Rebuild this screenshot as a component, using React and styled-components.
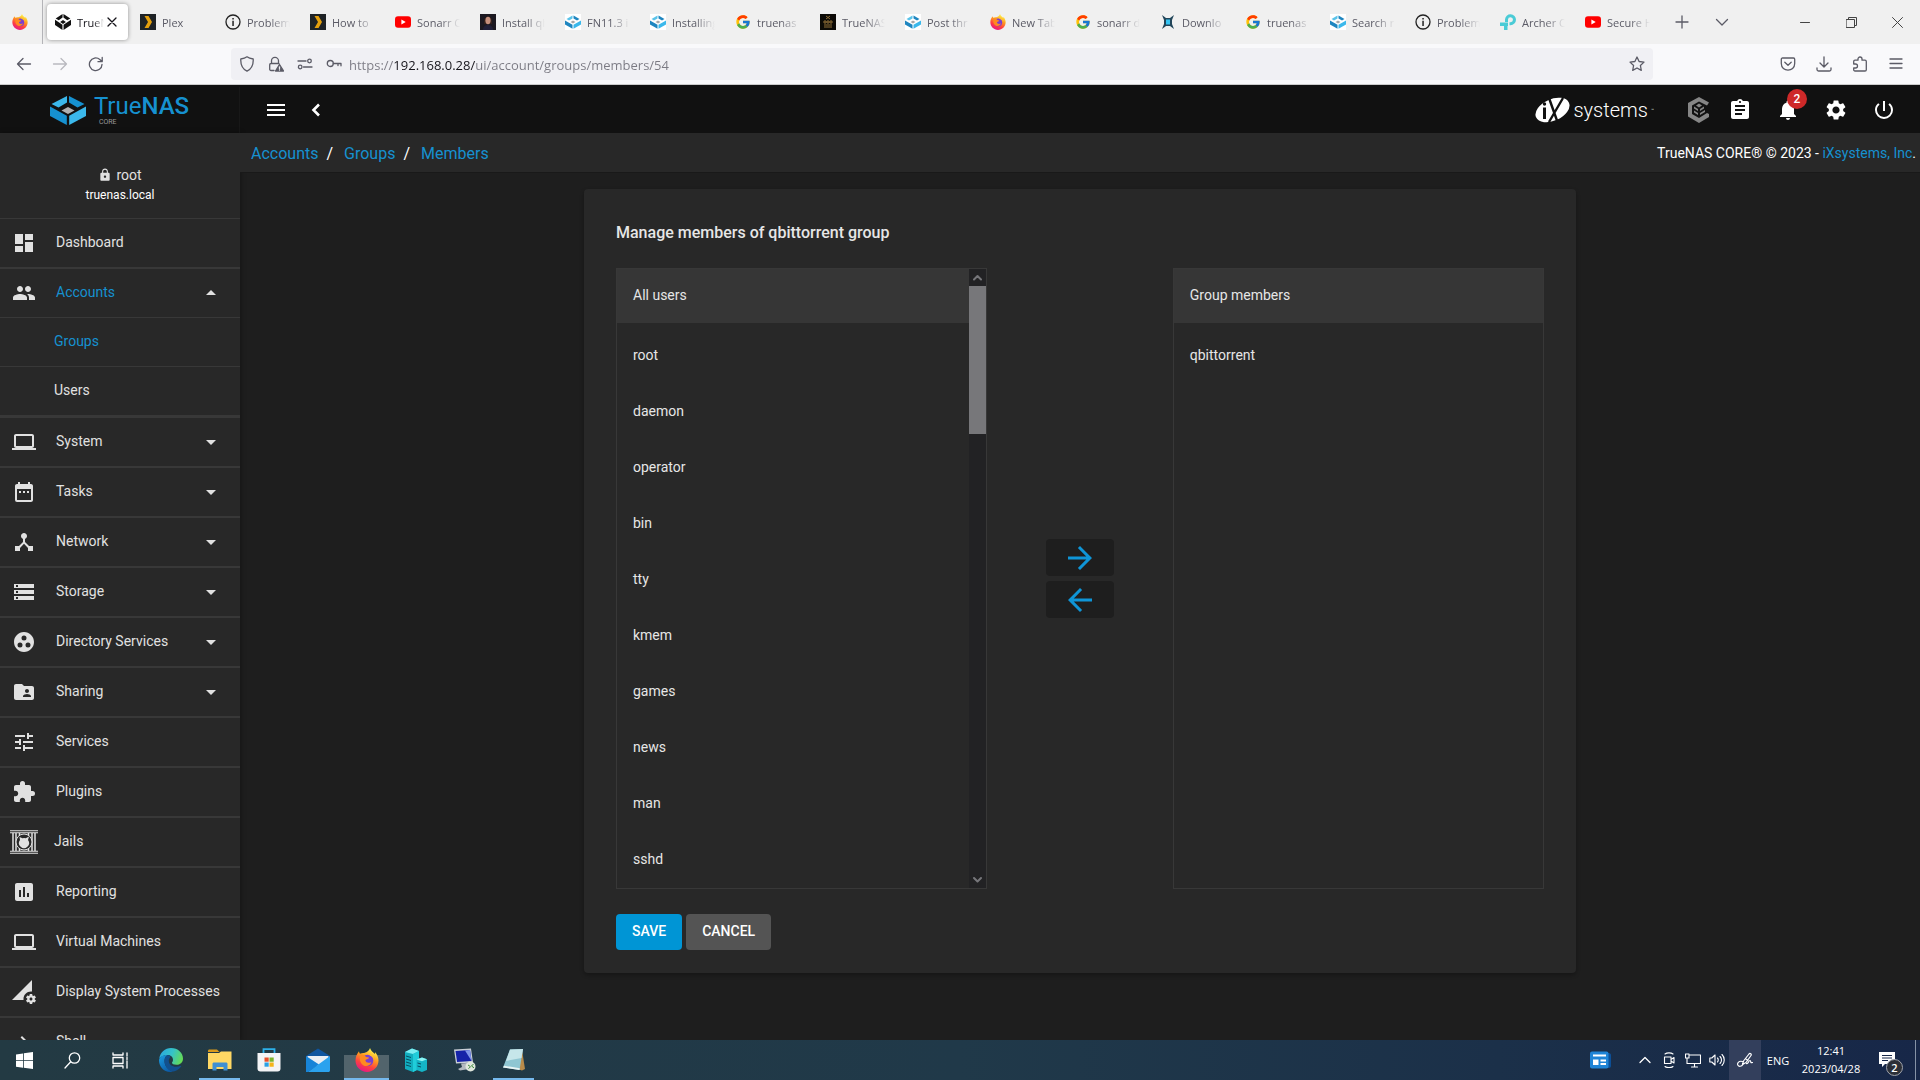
import React, { useState } from "react";
import styled, { createGlobalStyle, css } from "styled-components";
import {
  MdArrowBack,
  MdArrowDropDown,
  MdArrowDropUp,
  MdArrowForward,
  MdAssessment,
  MdAssignment,
  MdChevronRight,
  MdDashboard,
  MdDateRange,
  MdDeviceHub,
  MdExtension,
  MdFolderShared,
  MdGroup,
  MdGroupWork,
  MdLaptop,
  MdLock,
  MdMenu,
  MdNotifications,
  MdPermDataSetting,
  MdPowerSettingsNew,
  MdSettings,
  MdStorage,
  MdTune,
} from "react-icons/md";
import { FcGoogle } from "react-icons/fc";

const uiFont = `"Open Sans", "Noto Sans", sans-serif`;
const appFont = `Roboto, "Liberation Sans", sans-serif`;

const GlobalStyle = createGlobalStyle`
  * {
    box-sizing: border-box;
  }
  body {
    margin: 0;
    background: #1e1e1e;
    font-family: ${appFont};
    overflow: hidden;
  }
  button {
    border: 0;
    padding: 0;
    margin: 0;
    background: none;
    color: inherit;
    font: inherit;
    cursor: pointer;
  }
  a {
    color: inherit;
    text-decoration: none;
  }
  ul, ol {
    list-style: none;
    margin: 0;
    padding: 0;
  }
  svg {
    display: block;
    flex-shrink: 0;
  }
`;

const Screen = styled.div`
  display: flex;
  flex-direction: column;
  height: 100vh;
`;

// browser
const TabStrip = styled.div`
  display: flex;
  align-items: stretch;
  height: 44px;
  background: #f0f0f0;
  color: #5b5b66;
  font-family: ${uiFont};
  font-size: 11px;
`;
const PinnedTab = styled.button`
  display: flex;
  align-items: center;
  justify-content: center;
  width: 43px;
  padding-right: 3px;
  margin-right: 4px;
  border-right: 1px solid #b4b4b8;
`;
const TabItem = styled.div`
  display: flex;
  align-items: center;
  width: 81px;
  height: 36px;
  margin: 4px 4px 4px 0;
  padding-left: 8px;
  border-radius: 4px;
  ${(props) =>
    props.$active &&
    css`
      background: #fff;
      color: #15141a;
      box-shadow: 0 0 4px rgba(0, 0, 0, 0.4);
    `}
`;
const TabButton = styled.button`
  display: flex;
  align-items: center;
  gap: 6px;
  min-width: 0;
`;
const TabTitle = styled.span`
  width: ${(props) => (props.$active ? "27px" : "43px")};
  overflow: hidden;
  white-space: nowrap;
  text-align: left;
  line-height: 16px;
  padding-top: 1px;
  mask-image: linear-gradient(
    to left,
    transparent,
    #000 ${(props) => (props.$active ? "10px" : "20px")}
  );
`;
const StripButton = styled.button`
  display: flex;
  align-items: center;
  justify-content: center;
  width: 40px;
`;
const WindowButtons = styled.div`
  display: flex;
  margin-left: auto;
  color: #444;
`;
const WindowButton = styled.button`
  display: flex;
  align-items: center;
  justify-content: center;
  width: 46px;
`;
const Toolbar = styled.div`
  display: flex;
  align-items: center;
  height: 41px;
  padding: 0 6px;
  background: #f9f9fb;
  border-bottom: 1px solid #ccc;
  color: #5b5b66;
`;
const ToolButton = styled.button`
  display: flex;
  align-items: center;
  justify-content: center;
  width: 36px;
  height: 32px;
  opacity: ${(props) => (props.disabled ? 0.4 : 1)};
`;
const AddressBar = styled.label`
  display: flex;
  align-items: center;
  gap: 13px;
  flex: 1;
  height: 32px;
  margin-left: 117px;
  padding: 0 8px;
  border-radius: 4px;
  background: #f0f0f4;
`;
const AddressInput = styled.input`
  flex: 1;
  min-width: 0;
  border: 0;
  padding: 2px 0 0;
  margin-left: -6px;
  outline: none;
  font-family: ${uiFont};
  font-size: 13px;
  color: #7b7a83;
  -webkit-text-fill-color: transparent;
  background: linear-gradient(
    90deg,
    #7b7a83 45px,
    #15141a 45px,
    #15141a 127px,
    #7b7a83 127px
  );
  background-clip: text;
  -webkit-background-clip: text;
`;
const ToolGroup = styled.div`
  display: flex;
  margin-left: 117px;
`;

// header
const Header = styled.header`
  display: flex;
  align-items: center;
  height: 48px;
  padding-top: 2px;
  background: #111;
  color: #fff;
`;
const Brand = styled.a`
  display: flex;
  align-items: center;
  justify-content: center;
  gap: 8px;
  width: 240px;
  height: 46px;
  border-right: 1px solid #181818;
`;
const BrandWords = styled.span`
  display: flex;
  flex-direction: column;
  color: #1691d0;
  font-size: 24px;
  line-height: 23px;
  b {
    font-weight: 500;
  }
  small {
    padding-left: 5px;
    color: #999;
    font-size: 7px;
    line-height: 8px;
  }
`;
const HeaderNav = styled.div`
  display: flex;
  padding-left: 16px;
`;
const HeaderButton = styled.button`
  position: relative;
  display: flex;
  align-items: center;
  justify-content: center;
  width: ${(props) => props.$width || 48}px;
  height: 46px;
`;
const HeaderTools = styled.div`
  display: flex;
  align-items: center;
  margin-left: auto;
  padding-right: 12px;
`;
const IxLogo = styled.a`
  display: flex;
  align-items: center;
  gap: 3px;
  margin-right: 28px;
  font-size: 20px;
  font-weight: 300;
  line-height: 26px;
  sup {
    font-size: 5px;
    line-height: 8px;
    align-self: center;
  }
`;
const Badge = styled.span`
  position: absolute;
  top: 2px;
  right: 5px;
  width: 20px;
  height: 20px;
  border-radius: 50%;
  background: #ce2929;
  font-size: 12px;
  font-weight: 500;
  line-height: 20px;
  text-align: center;
`;

// sidebar
const Body = styled.div`
  display: flex;
  flex: 1;
  min-height: 0;
`;
const Sidebar = styled.nav`
  flex: 0 0 240px;
  overflow: hidden;
  background: #282828;
  color: #e1e1e1;
  box-shadow: 1px 0 5px rgba(0, 0, 0, 0.35);
`;
const UserInfo = styled.div`
  display: flex;
  flex-direction: column;
  align-items: center;
  height: 86px;
  padding-top: 32px;
  border-bottom: 1px solid #383838;
  font-size: 12px;
  line-height: 20px;
  color: #fff;
`;
const UserName = styled.span`
  display: flex;
  align-items: center;
  gap: 4px;
  color: #e1e1e1;
  font-size: 14px;
`;
const NavItem = styled.li`
  border-bottom: 2px solid #383838;
`;
const NavLink = styled.a`
  display: flex;
  align-items: center;
  height: 48px;
  padding: 0 17px 2px ${(props) => (props.$wide ? 10 : 12)}px;
  color: ${(props) => (props.$active ? "#1691d0" : "inherit")};
  font-size: 14px;
  svg {
    color: #e1e1e1;
    margin-top: 2px;
  }
`;
const NavLabel = styled.span`
  flex: 1;
  white-space: nowrap;
  margin-left: ${(props) => (props.$wide ? 16 : 20)}px;
`;
const SubItem = styled.li`
  border-top: 1px solid #383838;
  &:last-child {
    border-bottom: 1px solid #383838;
  }
`;
const SubLink = styled(NavLink)`
  padding-left: 54px;
`;

// page
const Main = styled.main`
  display: flex;
  flex-direction: column;
  flex: 1;
  min-width: 0;
`;
const BreadcrumbBar = styled.div`
  display: flex;
  align-items: center;
  justify-content: space-between;
  height: 40px;
  padding: 0 4px 0 11px;
  background: #282828;
  border-bottom: 1px solid #191919;
  color: #fff;
  font-size: 14px;
  a {
    color: #1691d0;
  }
`;
const Crumbs = styled.ol`
  display: flex;
  padding-top: 2px;
  font-size: 16px;
  li + li::before {
    content: "/";
    margin: 0 11px 0 8px;
  }
`;
const Card = styled.form`
  width: calc(60% - 16px);
  margin: 16px auto 0;
  padding: 32px 32px 23px;
  border-radius: 4px;
  background: #282828;
  color: #e6e6e6;
  box-shadow: 0 2px 4px rgba(0, 0, 0, 0.3);
  font-size: 14px;
`;
const CardTitle = styled.h1`
  margin: 0 0 23px;
  font-size: 16px;
  font-weight: 500;
  line-height: 24px;
`;
const Picker = styled.div`
  display: grid;
  grid-template-columns: 2fr 1fr 2fr;
  height: calc(100vh - 459px);
`;
const ListBox = styled.div`
  display: flex;
  min-width: 0;
  border: 1px solid #383838;
`;
const ListContent = styled.div`
  flex: 1;
  overflow: hidden;
`;
const ListHeading = styled.h2`
  margin: 0 0 4px;
  padding: 0 16px 2px;
  background: #363636;
  font-size: 14px;
  font-weight: 400;
  line-height: 52px;
`;
const ListOption = styled.button`
  display: block;
  width: 100%;
  padding: 0 16px;
  line-height: 56px;
  text-align: left;
`;
const ScrollTrack = styled.div`
  display: flex;
  flex-direction: column;
  width: 17px;
  background: #222224;
  color: #76767a;
`;
const ScrollArrow = styled.button`
  display: flex;
  align-items: center;
  justify-content: center;
  height: 17px;
`;
const ScrollThumb = styled.div`
  height: 148px;
  margin-bottom: auto;
  background: #77777a;
`;
const MoveButtons = styled.div`
  display: flex;
  flex-direction: column;
  align-items: center;
  justify-content: center;
  gap: 5px;
`;
const MoveButton = styled.button`
  display: flex;
  align-items: center;
  justify-content: center;
  width: 68px;
  height: 37px;
  border-radius: 4px;
  background: #1e1e1e;
  color: #0f95d7;
`;
const FormActions = styled.div`
  display: flex;
  gap: 4px;
  margin-top: 25px;
`;
const ActionButton = styled.button`
  height: 36px;
  padding: 0 16px 2px;
  border-radius: 4px;
  background: ${(props) => (props.$primary ? "#0095d5" : "#545454")};
  color: #fff;
  font-weight: 500;
  text-transform: uppercase;
`;

// taskbar
const Taskbar = styled.footer`
  display: flex;
  justify-content: space-between;
  height: 40px;
  background: linear-gradient(90deg, #233a43 0%, #203949 50%, #1b3049 78%, #172748 100%);
  color: #fff;
  font-family: ${uiFont};
  font-size: 11px;
`;
const TaskGroup = styled.div`
  display: flex;
  align-items: stretch;
`;
const PinnedApps = styled(TaskGroup)`
  margin-left: 2px;
`;
const TaskButton = styled.button`
  display: flex;
  align-items: center;
  justify-content: center;
  width: 48px;
`;
const AppButton = styled(TaskButton)`
  width: 41px;
  margin: 0 4px;
  border-bottom: 2px solid ${(props) => (props.$open ? "#76b9ed" : "transparent")};
  border-top: 2px solid transparent;
  ${(props) =>
    props.$focused &&
    css`
      width: 45px;
      margin: 0 2px;
      background: linear-gradient(transparent 13px, #52646c 13px) no-repeat;
    `}
`;
const TrayButton = styled.button`
  display: flex;
  align-items: center;
  justify-content: center;
  width: ${(props) => props.$width || 24}px;
  background: ${(props) => (props.$lit ? "#333f5c" : "none")};
`;
const Clock = styled.time`
  display: flex;
  flex-direction: column;
  align-items: center;
  justify-content: center;
  width: 72px;
  line-height: 18px;
`;
const Notice = styled.button`
  position: relative;
  width: 48px;
  padding-left: 12px;
`;
const NoticeCount = styled.span`
  position: absolute;
  left: 19px;
  top: 19px;
  width: 17px;
  height: 17px;
  border: 1px solid #a0a4ac;
  border-radius: 50%;
  background: #2c3038;
  font-weight: 600;
  line-height: 15px;
  text-align: center;
`;
const ShowDesktop = styled.button`
  width: 5px;
  border-left: 1px solid #8592a6;
`;

// drawings
const FirefoxIcon = ({ size = 16 }) => (
  <svg width={size} height={size} viewBox="0 0 24 24">
    <defs>
      <linearGradient id="ff-body" x1="0.75" y1="0" x2="0.3" y2="1">
        <stop offset="0.08" stopColor="#fff04a" />
        <stop offset="0.4" stopColor="#ff9a1f" />
        <stop offset="0.7" stopColor="#ff4040" />
        <stop offset="1" stopColor="#e3158a" />
      </linearGradient>
    </defs>
    <path
      d="M15 0c1 3 3 4 5 6 .2-.7 0-1.400-.1-2C22 6 23.500 9 23.500 12.500 23.500 18.800 18.300 24 12 24S.5 18.800.5 12.500C.5 8.600 2 5.500 4 3.200c.1 1.200.5 2 1 2.600C6.300 5 8 4.800 9.200 5c1.200-.4 4.800-1.500 5.800-5z"
      fill="url(#ff-body)"
    />
    <circle cx="12.500" cy="12.500" r="5.800" fill="#7b3fd0" />
    <path
      d="M5.500 7c2.500-.5 4.500.5 5.500 2l3 .6c0 1.600-2.600 1.500-3.600 2.700.3 2.600 3.600 3.300 6 1.600-1 3.800-5 5.200-8.200 3.300C5 15 4 10.500 5.500 7z"
      fill="#ff8a20"
    />
    <path d="M12 5c4 .5 7.500 3 7.500 8 0-3-2-4.500-4-5.200z" fill="#ffc22e" />
  </svg>
);

const TrueNasMark = ({ width = 36, height = 29, mono }) => {
  const c = mono
    ? ["#111", "#111", "#111", "#111", "#111"]
    : ["#3bb8eb", "#1691d0", "#1691d0", "#3bb8eb", "#b0b0b0"];
  return (
    <svg width={width} height={height} viewBox="0 0 36 29" preserveAspectRatio="none">
      <path d="M17 0v6.500L8.500 11.500 1.500 8z" fill={c[0]} />
      <path d="M19 0v6.500l8.500 5L34.500 8z" fill={c[1]} />
      <path d="M0 10.500l16.800 9.200V29L0 20z" fill={c[2]} />
      <path d="M36 10.500l-16.800 9.200V29L36 20z" fill={c[3]} />
      <path d="M11.500 14.500L18 11l6.500 3.500L18 18z" fill={c[4]} />
    </svg>
  );
};

const NasTabIcon = () => (
  <svg width="16" height="16" viewBox="0 0 16 16">
    <path d="M0 0h16v16H0z" fill="#fff" />
    <path d="M7.500 1.500v3L4 6.500 1.500 5z" fill="#5bc4ea" />
    <path d="M8.500 1.500v3L12 6.500 14.500 5z" fill="#1f86c0" />
    <path d="M0 6.500l7.500 4.200v4L0 10.500z" fill="#1f86c0" />
    <path d="M16 6.500l-7.500 4.200v4l7.500-4.200z" fill="#3bb8eb" />
    <path d="M5.500 8L8 6.600 10.500 8 8 9.400z" fill="#aaa" />
  </svg>
);

const PlexIcon = () => (
  <svg width="16" height="16" viewBox="0 0 16 16">
    <path d="M0 0h16v16H0z" fill="#1f2326" />
    <path d="M4.500 2h4l3.500 6-3.500 6h-4L8 8z" fill="#e5a00d" />
  </svg>
);

const InfoIcon = () => (
  <svg width="16" height="16" viewBox="0 0 16 16">
    <circle cx="8" cy="8" r="7" fill="none" stroke="#222" strokeWidth="1.300" />
    <path d="M7.300 6.800h1.500V12H7.300zM7.300 4h1.500v1.600H7.300z" fill="#222" />
  </svg>
);

const YoutubeIcon = () => (
  <svg width="16" height="16" viewBox="0 0 16 16">
    <rect y="2.300" width="16" height="11.400" rx="3" fill="#f00" />
    <path d="M6.400 5.400v5.200L10.700 8z" fill="#fff" />
  </svg>
);

const PortraitIcon = () => (
  <svg width="16" height="16" viewBox="0 0 16 16">
    <path d="M0 0h16v16H0z" fill="#1b1820" />
    <path d="M4 7c0-6 8-6 8 0v3H4z" fill="#33201c" />
    <ellipse cx="8" cy="6.500" rx="2.600" ry="3.700" fill="#c58f7c" />
    <path d="M3 16c0-4 3-5 5-5s5 1 5 5z" fill="#201f38" />
  </svg>
);

const DarkSiteIcon = () => (
  <svg width="16" height="16" viewBox="0 0 16 16">
    <path d="M0 0h16v16H0z" fill="#0c0a06" />
    <path
      d="M6 2l4 3M10 2L6 5M4 7h2v2H4zM7 7h2v2H7zM10 7h2v2h-2zM4 11h8M4 13h8"
      stroke="#8c6c36"
      fill="none"
    />
  </svg>
);

const DownloadSiteIcon = () => (
  <svg width="16" height="16" viewBox="0 0 16 16">
    <path d="M2 1l4 3h4l4-3-2 5v4l2 5-4-3H6l-4 3 2-5V6z" fill="#22465a" />
    <path d="M6 5.500h4v5H6z" fill="#35c5f4" />
  </svg>
);

const ArcherIcon = () => (
  <svg width="16" height="16" viewBox="0 0 16 16">
    <path
      d="M6.500 8V5.500a4 4 0 1 1 4 4.200H9.500"
      fill="none"
      stroke="#4acbd6"
      strokeWidth="3"
    />
    <path d="M0 8.500h8v3.500H7.500v4H4v-4H0z" fill="#4acbd6" />
  </svg>
);

const Line = ({ size = 16, d, children, width = 1.3, vb = 16 }) => (
  <svg
    width={size}
    height={size}
    viewBox={`0 0 ${vb} ${vb}`}
    fill="none"
    stroke="currentColor"
    strokeWidth={width}
    strokeLinecap="round"
    strokeLinejoin="round"
  >
    {d && <path d={d} />}
    {children}
  </svg>
);

const IxMark = () => (
  <svg width="35" height="26" viewBox="0 0 35 26">
    <ellipse
      cx="17.500"
      cy="13"
      rx="18"
      ry="10.800"
      transform="rotate(-24 17.500 13)"
      fill="#fff"
    />
    <path
      d="M14 1l8.500 24M28 1L14 25"
      stroke="#111"
      strokeWidth="2.400"
      fill="none"
    />
    <path d="M8 10.500h3V22H8z" fill="#111" />
    <circle cx="9.500" cy="7" r="1.700" fill="#111" />
  </svg>
);

const TrueCommandMark = () => (
  <svg width="22" height="26" viewBox="0 0 22 26">
    <path
      d="M21 5.500L11 0 0 6v13.500L11 26l10-6v-3l-2-1-8 5-7-4V8.500l7-4 8 4z"
      fill="#868686"
    />
    <path
      d="M11 6.500l3 2-3 2-3-2zM6 9.500l4 2.500v2L6 11.500zM16 9.500L12 12v2l4-2.500zM6 13.500l4 2.500v2l-4-2.500zM17 13l-5 3v2l5-3z"
      fill="#868686"
    />
  </svg>
);

const JailIcon = () => (
  <svg width="28" height="24" viewBox="0 0 28 24">
    <path
      d="M0 .8h28M0 2.800h28M0 21.200h28M0 23.200h28"
      stroke="currentColor"
      strokeWidth="1.100"
    />
    <path
      d="M3 3v18M6 3v18M9.500 3v18M18.500 3v18M22 3v18M25 3v18"
      stroke="currentColor"
      strokeWidth="1.500"
    />
    <circle cx="14" cy="12" r="8" fill="#282828" stroke="currentColor" />
    <path
      d="M9.500 7l3 1.200a6 6 0 0 1 3.200 0L19 6.500l-1 3.500a5 5 0 1 1-8 0z"
      fill="currentColor"
    />
  </svg>
);

const EdgeIcon = () => (
  <svg width="24" height="24" viewBox="0 0 24 24">
    <defs>
      <linearGradient id="edge-top" x1="0" y1="0.3" x2="1" y2="0.6">
        <stop offset="0" stopColor="#2aa8e0" />
        <stop offset="0.5" stopColor="#35c3c8" />
        <stop offset="1" stopColor="#66dc52" />
      </linearGradient>
      <linearGradient id="edge-low" x1="0" y1="0" x2="0.7" y2="1">
        <stop offset="0" stopColor="#1b9de2" />
        <stop offset="1" stopColor="#0c59a4" />
      </linearGradient>
    </defs>
    <path
      d="M.3 10.500C1.200 4.500 6 0 12 0c7 0 12 5 12 10.500 0 4-3 6.300-6.500 6.300-3 0-4.500-1-4.500-2 0-.6 1-1.200 1-3C14 9 11.500 7 8.500 7 4.500 7 1.500 9 .3 10.500z"
      fill="url(#edge-top)"
    />
    <path
      d="M0 12.500C0 9 4 6.800 8.500 7 6 8.500 5.500 11 5.500 13c0 5 3.500 9 8.500 10.500-7.500 2-14-4-14-11z"
      fill="url(#edge-low)"
    />
    <path
      d="M8.500 7C6 8.500 5.500 11 5.500 13c0 6 5 10.500 9 10.500 3.500-.7 6.200-2.800 7.700-5.300.2-.5-.2-.7-.6-.4C16 20 9.800 18 9.800 12.700c0-1.500.6-2.700 1.800-3.800C11 7.800 10 7.200 8.500 7z"
      fill="#12508e"
    />
  </svg>
);

const FolderIcon = () => (
  <svg width="24" height="24" viewBox="0 0 24 24">
    <path d="M0 4V3c0-1 .5-1.500 1.500-1.500H9L11.500 4z" fill="#d99a1c" />
    <path d="M0 5h11l2-1.500h10.500V21H0z" fill="#ffd864" />
    <path d="M4.500 22.500V16c0-1 .5-1.500 1.500-1.500h12c1 0 1.500.5 1.500 1.500v6.500h-4V19h-7v3.500z" fill="#3f8fd2" />
  </svg>
);

const StoreIcon = () => (
  <svg width="24" height="24" viewBox="0 0 24 24">
    <path d="M6.500 5V1.200h11V5" fill="none" stroke="#2db1ea" strokeWidth="1.800" />
    <path d="M.5 5h23v15.500c0 2-1 3-3 3h-17c-2 0-3-1-3-3z" fill="#f4f4f6" />
    <path d="M7.500 9.500h4.200v4.200H7.500z" fill="#e8502a" />
    <path d="M12.500 9.500h4.200v4.200h-4.200z" fill="#7cb32b" />
    <path d="M7.500 14.500h4.200v4.200H7.500z" fill="#2aa0e4" />
    <path d="M12.500 14.500h4.200v4.200h-4.200z" fill="#f4b41a" />
  </svg>
);

const MailIcon = () => (
  <svg width="24" height="24" viewBox="0 0 24 24">
    <path d="M0 8l12-7.500L24 8v8H0z" fill="#0f559f" />
    <path d="M1.500 8h21v8l-10.500 2-10.500-2z" fill="#e9eef4" />
    <path d="M0 8l13 8.500L2 24H0z" fill="#1784d8" />
    <path d="M24 8L2 24h20c1.500 0 2-.5 2-2z" fill="#2ba2ee" />
  </svg>
);

const ServerIcon = () => (
  <svg width="24" height="24" viewBox="0 0 24 24">
    <path d="M1 4l7-3.500L15 3v18l-6 3-8-3z" fill="#12aebf" />
    <path d="M1 4l7-3.500L15 3 9 6z" fill="#7beef2" />
    <path d="M9 6l6-3v18l-6 3z" fill="#20cdda" />
    <path d="M2 8l5 1.500M2 11l5 1.500M2 14l5 1.500M2 17l5 1.500" stroke="#064e62" />
    <path d="M12.500 11.500l5.500-2 5 1.800V22l-5 2-5.500-2z" fill="#15b4c6" />
    <path d="M12.500 11.500l5.500-2 5 1.800-5 2z" fill="#8af4f4" />
    <path d="M13.500 15l3.500 1M13.500 18l3.500 1" stroke="#064e62" />
  </svg>
);

const RemoteIcon = () => (
  <svg width="24" height="24" viewBox="0 0 24 24">
    <path d="M1 1.500L18 .5l2 14-17 1z" fill="#c9ced6" />
    <path d="M2.500 3l14.500-1 1.600 11-14.500 1z" fill="#1522a8" />
    <path d="M12 2.400l5-.4 1.600 11z" fill="#7f95e8" />
    <path d="M8 15.500l6-.4 1 4 4 1.500-12 2-2-1.500 4-2z" fill="#b3b8bf" />
    <circle cx="17.500" cy="18.500" r="5" fill="#dfe6dc" />
    <path d="M15 17l2.500 1.700-2 2M20.500 16l-2 2 2.500 1.800" stroke="#3d8b3b" fill="none" />
  </svg>
);

const NotepadIcon = () => (
  <svg width="24" height="24" viewBox="0 0 24 24">
    <path d="M20 2l3 19-3 1.500-3-1z" fill="#b98b4a" />
    <path d="M8 1.500L21 1l-3.500 21L1 19.500z" fill="#8fc6d2" />
    <path d="M8 1.500L21 1l-1.500 9L4 13z" fill="#c6e6ea" />
    <path d="M1 19.500L17.500 22l.3-1.800L2 17.700z" fill="#e9f4f4" />
  </svg>
);

const WindowsIcon = () => (
  <svg width="17" height="17" viewBox="0 0 17 17" fill="#fff">
    <path d="M0 2.400L7 1.400v6.800H0zM7.800 1.300L17 0v8.200H7.800zM0 8.900h7v6.800l-7-1zM7.800 8.900H17V17l-9.200-1.300z" />
  </svg>
);

const NewsIcon = () => (
  <svg width="21" height="18" viewBox="0 0 21 18">
    <path d="M4 2h15c1 0 2 1 2 2v11c0 1-1 2-2 2H4z" fill="#0c4f96" />
    <rect width="18.500" height="17" y=".5" rx="2" fill="#1f84d6" />
    <path d="M3 4.500h13M10.500 9.500h5.500M10.500 13h5.500" stroke="#fff" strokeWidth="2" />
    <path d="M3 8.500h5.500V14H3z" fill="#fff" />
  </svg>
);

const tabs = [
  { title: "TrueNAS", icon: <TrueNasMark mono width={16} height={16} />, active: true },
  { title: "Plex", icon: <PlexIcon /> },
  { title: "Problem", icon: <InfoIcon /> },
  { title: "How to", icon: <PlexIcon /> },
  { title: "Sonarr C", icon: <YoutubeIcon /> },
  { title: "Install qb", icon: <PortraitIcon /> },
  { title: "FN11.3 i", icon: <NasTabIcon /> },
  { title: "Installing", icon: <NasTabIcon /> },
  { title: "truenas", icon: <FcGoogle size={16} /> },
  { title: "TrueNAS", icon: <DarkSiteIcon /> },
  { title: "Post thr", icon: <NasTabIcon /> },
  { title: "New Tab", icon: <FirefoxIcon /> },
  { title: "sonarr d", icon: <FcGoogle size={16} /> },
  { title: "Downlo", icon: <DownloadSiteIcon /> },
  { title: "truenas", icon: <FcGoogle size={16} /> },
  { title: "Search r", icon: <NasTabIcon /> },
  { title: "Problem", icon: <InfoIcon /> },
  { title: "Archer C", icon: <ArcherIcon /> },
  { title: "Secure H", icon: <YoutubeIcon /> },
];

const menu = [
  { label: "Dashboard", icon: MdDashboard },
  { label: "Accounts", icon: MdGroup, open: true, sub: ["Groups", "Users"] },
  { label: "System", icon: MdLaptop, sub: [] },
  { label: "Tasks", icon: MdDateRange, sub: [] },
  { label: "Network", icon: MdDeviceHub, sub: [] },
  { label: "Storage", icon: MdStorage, sub: [] },
  { label: "Directory Services", icon: MdGroupWork, sub: [] },
  { label: "Sharing", icon: MdFolderShared, sub: [] },
  { label: "Services", icon: MdTune },
  { label: "Plugins", icon: MdExtension },
  { label: "Jails", icon: JailIcon, wide: true },
  { label: "Reporting", icon: MdAssessment },
  { label: "Virtual Machines", icon: MdLaptop },
  { label: "Display System Processes", icon: MdPermDataSetting },
  { label: "Shell", icon: MdChevronRight },
];

const systemUsers = [
  "root",
  "daemon",
  "operator",
  "bin",
  "tty",
  "kmem",
  "games",
  "news",
  "man",
  "sshd",
];

const Browser = () => {
  const [url, setUrl] = useState(
    "https://192.168.0.28/ui/account/groups/members/54"
  );
  return (
    <>
      <TabStrip>
        <PinnedTab aria-label="Firefox">
          <FirefoxIcon />
        </PinnedTab>
        {tabs.map((tab, i) => (
          <TabItem key={i} $active={tab.active}>
            <TabButton>
              {tab.icon}
              <TabTitle $active={tab.active}>{tab.title}</TabTitle>
            </TabButton>
            {tab.active && (
              <button aria-label="Close tab">
                <Line d="M4 4l8 8M12 4l-8 8" />
              </button>
            )}
          </TabItem>
        ))}
        <StripButton aria-label="New tab">
          <Line d="M8 2v12M2 8h12" />
        </StripButton>
        <StripButton aria-label="List all tabs">
          <Line d="M2.500 5.500L8 11l5.500-5.500" />
        </StripButton>
        <WindowButtons>
          <WindowButton aria-label="Minimize">
            <Line size={10} vb={10} width={1} d="M.5 5.500h9" />
          </WindowButton>
          <WindowButton aria-label="Restore">
            <Line size={11} vb={11} width={1} d="M.5 2.500h8v8h-8zM2.500 2.500v-2h8v8h-2" />
          </WindowButton>
          <WindowButton aria-label="Close">
            <Line size={11} vb={11} width={1} d="M.5.5l10 10M10.500.5l-10 10" />
          </WindowButton>
        </WindowButtons>
      </TabStrip>
      <Toolbar>
        <ToolButton aria-label="Back">
          <Line d="M1.500 8h13M7 2.500L1.500 8 7 13.500" />
        </ToolButton>
        <ToolButton aria-label="Forward" disabled>
          <Line d="M14.500 8h-13M9 2.500L14.500 8 9 13.500" />
        </ToolButton>
        <ToolButton aria-label="Reload">
          <Line d="M14 8.500A6.300 6.300 0 1 1 11.800 3.500L14 5.500M14.200 1.500v4.200H10" />
        </ToolButton>
        <AddressBar>
          <Line d="M8 .8c2 1.500 4 1.900 6.200 2.200.3 5-1.200 9.700-6.200 12.200C3 12.700 1.500 8 1.800 3 4 2.700 6 2.300 8 .8z" />
          <Line d="M3.500 7.500V5a3.500 3.500 0 0 1 7-.2V7M6 14.500H3c-.8 0-1.300-.5-1.300-1.300v-4.400c0-.8.5-1.300 1.300-1.300h8">
            <path d="M11.500 8.500L15.500 15h-8z" fill="currentColor" />
            <path d="M11.500 10.800v1.800M11.500 13.800v.2" stroke="#f0f0f4" />
          </Line>
          <Line d="M1 5h8M6.500 11H15">
            <circle cx="12.500" cy="5" r="1.800" />
            <circle cx="3.200" cy="11" r="1.800" />
          </Line>
          <Line d="M7.300 7.500H15v2.300M12 7.500v2">
            <circle cx="4.300" cy="7.500" r="3" />
          </Line>
          <AddressInput
            aria-label="Address"
            value={url}
            spellCheck={false}
            onChange={(e) => setUrl(e.target.value)}
          />
          <Line d="M8 1l2.100 4.500 4.900.6-3.600 3.400.9 4.900L8 12l-4.300 2.400.9-4.900L1 6.100l4.900-.6z" />
        </AddressBar>
        <ToolGroup>
          <ToolButton aria-label="Pocket">
            <Line d="M2.500 2h11c.7 0 1.200.5 1.200 1.200V7.500c0 8.700-13.400 8.700-13.400 0V3.200C1.300 2.500 1.800 2 2.500 2zM4.800 6.200L8 9.300l3.200-3.100" />
          </ToolButton>
          <ToolButton aria-label="Downloads">
            <Line d="M8 .8v10M4 7l4 4 4-4M1 12v1.500c0 .9.600 1.500 1.500 1.500h11c.9 0 1.500-.6 1.500-1.500V12" />
          </ToolButton>
          <ToolButton aria-label="Extensions">
            <Line d="M6 4.200V3a2 2 0 0 1 4 0v1.200h3c.8 0 1.300.5 1.300 1.300v8.200c0 .8-.5 1.300-1.300 1.300H3c-.8 0-1.300-.5-1.300-1.300V12h1.800a2 2 0 0 0 0-4H1.700V5.500c0-.8.500-1.300 1.300-1.300z" />
          </ToolButton>
          <ToolButton aria-label="Menu">
            <Line d="M2 3h12M2 7.500h12M2 12h12" />
          </ToolButton>
        </ToolGroup>
      </Toolbar>
    </>
  );
};

const AppHeader = () => (
  <Header>
    <Brand href="#">
      <TrueNasMark />
      <BrandWords>
        <span>
          True<b>NAS</b>
        </span>
        <small>CORE</small>
      </BrandWords>
    </Brand>
    <HeaderNav>
      <HeaderButton $width={40} aria-label="Toggle menu">
        <MdMenu size={24} />
      </HeaderButton>
      <HeaderButton $width={40} aria-label="Collapse">
        <svg width="12" height="14" viewBox="0 0 12 14">
          <path d="M9 1.500L3.500 7 9 12.500" fill="none" stroke="#fff" strokeWidth="2.600" />
        </svg>
      </HeaderButton>
    </HeaderNav>
    <HeaderTools>
      <IxLogo href="#">
        <IxMark />
        <span>systems</span>
        <sup>™</sup>
      </IxLogo>
      <HeaderButton $width={34} aria-label="TrueCommand">
        <TrueCommandMark />
      </HeaderButton>
      <HeaderButton aria-label="Task manager">
        <MdAssignment size={24} />
      </HeaderButton>
      <HeaderButton aria-label="Alerts">
        <MdNotifications size={24} />
        <Badge>2</Badge>
      </HeaderButton>
      <HeaderButton aria-label="Settings">
        <MdSettings size={24} />
      </HeaderButton>
      <HeaderButton aria-label="Power">
        <MdPowerSettingsNew size={24} />
      </HeaderButton>
    </HeaderTools>
  </Header>
);

const SideMenu = () => (
  <Sidebar>
    <UserInfo>
      <UserName>
        <MdLock size={14} />
        root
      </UserName>
      truenas.local
    </UserInfo>
    <ul>
      {menu.map(({ label, icon: Icon, sub, open, wide }) => (
        <NavItem key={label}>
          <NavLink href="#" $active={open} $wide={wide}>
            {wide ? <Icon /> : <Icon size={24} />}
            <NavLabel $wide={wide}>{label}</NavLabel>
            {sub && (open ? <MdArrowDropUp size={24} /> : <MdArrowDropDown size={24} />)}
          </NavLink>
          {open && (
            <ul>
              {sub.map((name) => (
                <SubItem key={name}>
                  <SubLink href="#" $active={name === "Groups"}>
                    {name}
                  </SubLink>
                </SubItem>
              ))}
            </ul>
          )}
        </NavItem>
      ))}
    </ul>
  </Sidebar>
);

const UserList = ({ title, users, selected, onSelect, children }) => (
  <ListBox>
    <ListContent>
      <ListHeading>{title}</ListHeading>
      <ul>
        {users.map((user) => (
          <li key={user}>
            <ListOption
              type="button"
              aria-pressed={selected === user}
              onClick={() => onSelect(user)}
            >
              {user}
            </ListOption>
          </li>
        ))}
      </ul>
    </ListContent>
    {children}
  </ListBox>
);

const MembersForm = () => {
  const [users, setUsers] = useState(systemUsers);
  const [members, setMembers] = useState(["qbittorrent"]);
  const [selected, setSelected] = useState(null);

  const handleAdd = () => {
    if (!users.includes(selected)) return;
    setUsers(users.filter((u) => u !== selected));
    setMembers([...members, selected]);
  };
  const handleRemove = () => {
    if (!members.includes(selected)) return;
    setMembers(members.filter((u) => u !== selected));
    setUsers([...users, selected]);
  };

  return (
    <Card onSubmit={(e) => e.preventDefault()}>
      <CardTitle>Manage members of qbittorrent group</CardTitle>
      <Picker>
        <UserList title="All users" users={users} selected={selected} onSelect={setSelected}>
          <ScrollTrack>
            <ScrollArrow type="button" aria-label="Scroll up">
              <Line size={9} vb={9} width={2} d="M1 6.500L4.500 3 8 6.500" />
            </ScrollArrow>
            <ScrollThumb />
            <ScrollArrow type="button" aria-label="Scroll down">
              <Line size={9} vb={9} width={2} d="M1 3l3.500 3.500L8 3" />
            </ScrollArrow>
          </ScrollTrack>
        </UserList>
        <MoveButtons>
          <MoveButton type="button" aria-label="Add to group" onClick={handleAdd}>
            <MdArrowForward size={36} />
          </MoveButton>
          <MoveButton type="button" aria-label="Remove from group" onClick={handleRemove}>
            <MdArrowBack size={36} />
          </MoveButton>
        </MoveButtons>
        <UserList
          title="Group members"
          users={members}
          selected={selected}
          onSelect={setSelected}
        />
      </Picker>
      <FormActions>
        <ActionButton type="submit" $primary>
          Save
        </ActionButton>
        <ActionButton type="button">Cancel</ActionButton>
      </FormActions>
    </Card>
  );
};

const WindowsTaskbar = () => (
  <Taskbar>
    <TaskGroup>
      <TaskButton aria-label="Start">
        <WindowsIcon />
      </TaskButton>
      <TaskButton aria-label="Search">
        <Line size={17} vb={17} d="M1 16l5.500-6">
          <circle cx="10.500" cy="6" r="5.200" />
        </Line>
      </TaskButton>
      <TaskButton aria-label="Task view">
        <Line
          size={17}
          vb={17}
          d="M1 1v2h10V1M1 16v-2h10v2M1 5.500h10v6H1zM15 1v3M15 9v7M15 5.500v2"
        />
      </TaskButton>
      <PinnedApps>
        <AppButton aria-label="Edge">
          <EdgeIcon />
        </AppButton>
        <AppButton aria-label="File Explorer" $open>
          <FolderIcon />
        </AppButton>
        <AppButton aria-label="Store">
          <StoreIcon />
        </AppButton>
        <AppButton aria-label="Mail">
          <MailIcon />
        </AppButton>
        <AppButton aria-label="Firefox" $open $focused>
          <FirefoxIcon size={24} />
        </AppButton>
        <AppButton aria-label="Server">
          <ServerIcon />
        </AppButton>
        <AppButton aria-label="Remote Desktop">
          <RemoteIcon />
        </AppButton>
        <AppButton aria-label="Notepad" $open>
          <NotepadIcon />
        </AppButton>
      </PinnedApps>
    </TaskGroup>
    <TaskGroup>
      <TrayButton $width={66} aria-label="News">
        <NewsIcon />
      </TrayButton>
      <TrayButton aria-label="Hidden icons">
        <Line size={12} vb={12} d="M1 8.500l5-5 5 5" />
      </TrayButton>
      <TrayButton aria-label="Meet now">
        <Line d="M3.500 5h6.500v6.500H3.500zM10 7.500l3-2v5.500l-3-2M4 2c2-1.500 6-1.500 8 0M4 14.500c2 1.500 6 1.500 8 0" width={1.1} />
      </TrayButton>
      <TrayButton aria-label="Network">
        <Line d="M5 3h10.500v8.500H4M9.500 11.500V15M6.500 15h6M.5 2h3.500v4H.5zM2 6v5.500h2" width={1.1} />
      </TrayButton>
      <TrayButton aria-label="Volume">
        <Line d="M.8 6h2L6 3v10L2.800 10h-2zM8.500 6c1 1 1 3 0 4M11 4.500c2 2 2 5 0 7M13 2.500c3 3 3 8 0 11" width={1.1} />
      </TrayButton>
      <TrayButton $width={32} $lit aria-label="Pen">
        <Line width={1.2}>
          <path d="M5.500 12.500L6.500 9l5.500-7c1-1.200 3 .2 2 1.500L9 10.500zM8.500 6.500l2.500 2" />
          <path d="M5.500 9.500C2 8.500 0 11 .8 13c1 2 4 1.500 5-.5M9.500 11.500c1.500 1 2-3 3.500-3s-.5 3 2.500 2" />
        </Line>
      </TrayButton>
      <TrayButton $width={34} aria-label="Language">
        ENG
      </TrayButton>
      <Clock>
        <span>12:41</span>
        <span>2023/04/28</span>
      </Clock>
      <Notice aria-label="Notifications">
        <svg width="16" height="16" viewBox="0 0 16 16">
          <path d="M0 0h16v12H6l-3 3v-3H0z" fill="#fff" />
          <path d="M3 3.500h10M3 6h10M3 8.500h6" stroke="#172748" />
        </svg>
        <NoticeCount>2</NoticeCount>
      </Notice>
      <ShowDesktop aria-label="Show desktop" />
    </TaskGroup>
  </Taskbar>
);

const App = () => (
  <Screen>
    <GlobalStyle />
    <Browser />
    <AppHeader />
    <Body>
      <SideMenu />
      <Main>
        <BreadcrumbBar>
          <Crumbs>
            <li>
              <a href="#">Accounts</a>
            </li>
            <li>
              <a href="#">Groups</a>
            </li>
            <li>
              <a href="#">Members</a>
            </li>
          </Crumbs>
          <span>
            TrueNAS CORE® © 2023 - <a href="#">iXsystems, Inc</a>.
          </span>
        </BreadcrumbBar>
        <MembersForm />
      </Main>
    </Body>
    <WindowsTaskbar />
  </Screen>
);

export default App;
